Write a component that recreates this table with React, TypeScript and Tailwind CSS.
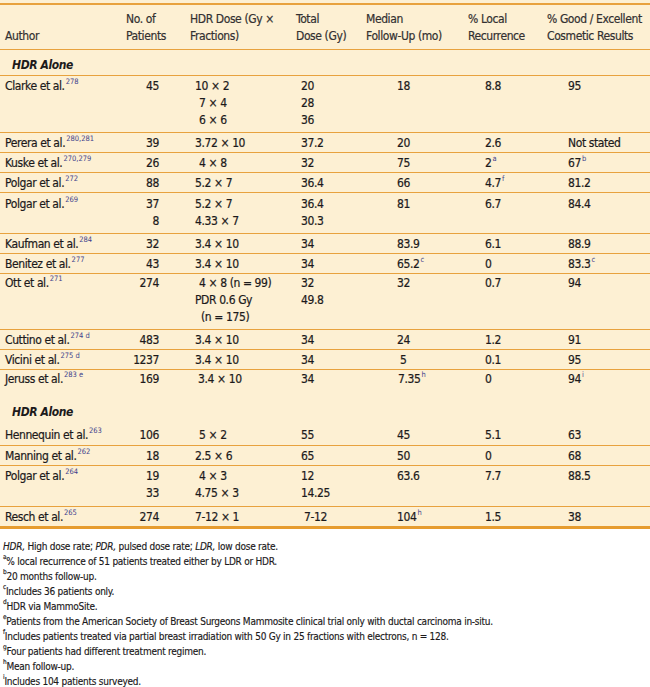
import React from "react"

const LINE = "border-[#e8a23e]"

function Ref({ children }: { children: React.ReactNode }) {
  return <sup className="ml-[1px] text-[7.5px] tracking-normal text-[#3d3f8c] top-[-0.75em] [-webkit-text-stroke:0px]">{children}</sup>
}

type Dose = [string, boolean?]

type Row = {
  author: React.ReactNode
  patients: string[]
  dose: Dose[]
  total: string[]
  median: React.ReactNode[]
  local: React.ReactNode[]
  cosmetic: React.ReactNode[]
  pad?: string
  noLine?: boolean
}

const first: Row[] = [
  {
    author: <>Clarke et al.<Ref>278</Ref></>,
    patients: ["45"],
    dose: [["10 × 2"], ["7 × 4", true], ["6 × 6", true]],
    total: ["20", "28", "36"],
    median: ["18"],
    local: ["8.8"],
    cosmetic: ["95"],
    pad: "pt-[2px] pb-[3px]",
  },
  {
    author: <>Perera et al.<Ref>280,281</Ref></>,
    patients: ["39"],
    dose: [["3.72 × 10"]],
    total: ["37.2"],
    median: ["20"],
    local: ["2.6"],
    cosmetic: ["Not stated"],
  },
  {
    author: <>Kuske et al.<Ref>270,279</Ref></>,
    patients: ["26"],
    dose: [["4 × 8", true]],
    total: ["32"],
    median: ["75"],
    local: [<>2<Ref>a</Ref></>],
    cosmetic: [<>67<Ref>b</Ref></>],
  },
  {
    author: <>Polgar et al.<Ref>272</Ref></>,
    patients: ["88"],
    dose: [["5.2 × 7"]],
    total: ["36.4"],
    median: ["66"],
    local: [<>4.7<Ref>f</Ref></>],
    cosmetic: ["81.2"],
  },
  {
    author: <>Polgar et al.<Ref>269</Ref></>,
    patients: ["37", "8"],
    dose: [["5.2 × 7"], ["4.33 × 7"]],
    total: ["36.4", "30.3"],
    median: ["81"],
    local: ["6.7"],
    cosmetic: ["84.4"],
    pad: "pt-[3px] pb-[3px]",
  },
  {
    author: <>Kaufman et al.<Ref>284</Ref></>,
    patients: ["32"],
    dose: [["3.4 × 10"]],
    total: ["34"],
    median: ["83.9"],
    local: ["6.1"],
    cosmetic: ["88.9"],
  },
  {
    author: <>Benitez et al.<Ref>277</Ref></>,
    patients: ["43"],
    dose: [["3.4 × 10"]],
    total: ["34"],
    median: [<>65.2<Ref>c</Ref></>],
    local: ["0"],
    cosmetic: [<>83.3<Ref>c</Ref></>],
  },
  {
    author: <>Ott et al.<Ref>271</Ref></>,
    patients: ["274"],
    dose: [["4 × 8 (n = 99)", true], ["PDR 0.6 Gy"], ["  (n = 175)"]],
    total: ["32", "49.8"],
    median: ["32"],
    local: ["0.7"],
    cosmetic: ["94"],
    pad: "pt-[1px] pb-[3px]",
  },
  {
    author: <>Cuttino et al.<Ref>274 d</Ref></>,
    patients: ["483"],
    dose: [["3.4 × 10"]],
    total: ["34"],
    median: ["24"],
    local: ["1.2"],
    cosmetic: ["91"],
  },
  {
    author: <>Vicini et al.<Ref>275 d</Ref></>,
    patients: ["1237"],
    dose: [["3.4 × 10"]],
    total: ["34"],
    median: [<span className="pl-[3px]">5</span>],
    local: ["0.1"],
    cosmetic: ["95"],
  },
  {
    author: <>Jeruss et al.<Ref>283 e</Ref></>,
    patients: ["169"],
    dose: [[" 3.4 × 10"]],
    total: ["34"],
    median: [<span className="pl-[1px]">7.35<Ref>h</Ref></span>],
    local: ["0"],
    cosmetic: [<>94<Ref>i</Ref></>],
    pad: "pt-[1px] pb-[16px]",
    noLine: true,
  },
]

const second: Row[] = [
  {
    author: <>Hennequin et al.<Ref>263</Ref></>,
    patients: ["106"],
    dose: [["5 × 2", true]],
    total: ["55"],
    median: ["45"],
    local: ["5.1"],
    cosmetic: ["63"],
    pad: "pt-[4px] pb-[1px]",
  },
  {
    author: <>Manning et al.<Ref>262</Ref></>,
    patients: ["18"],
    dose: [["2.5 × 6"]],
    total: ["65"],
    median: ["50"],
    local: ["0"],
    cosmetic: ["68"],
  },
  {
    author: <>Polgar et al.<Ref>264</Ref></>,
    patients: ["19", "33"],
    dose: [["4 × 3", true], ["4.75 × 3"]],
    total: ["12", "14.25"],
    median: ["63.6"],
    local: ["7.7"],
    cosmetic: ["88.5"],
    pad: "pt-[2px] pb-[4px]",
  },
  {
    author: <>Resch et al.<Ref>265</Ref></>,
    patients: ["274"],
    dose: [["7-12 × 1"]],
    total: [" 7-12"],
    median: [<>104<Ref>h</Ref></>],
    local: ["1.5"],
    cosmetic: ["38"],
    noLine: true,
  },
]

function Lines({ items }: { items: React.ReactNode[] }) {
  return (
    <>
      {items.map((it, i) => (
        <div key={i} className="whitespace-pre">
          {it}
        </div>
      ))}
    </>
  )
}

function DataRow({ row }: { row: Row }) {
  const cell = `align-top ${row.pad ?? "pt-[2px] pb-0"} ${row.noLine ? "" : `border-b ${LINE}`}`
  return (
    <tr>
      <td className={`${cell} pl-[5px] whitespace-nowrap`}>{row.author}</td>
      <td className={`${cell} pr-[26px] text-right`}>
        <Lines items={row.patients} />
      </td>
      <td className={`${cell} pl-[10px]`}>
        {row.dose.map(([d, short], i) => (
          <div key={i} className={`whitespace-pre ${short ? "pl-[4px]" : ""}`}>
            {d}
          </div>
        ))}
      </td>
      <td className={`${cell} pl-[11px]`}>
        <Lines items={row.total} />
      </td>
      <td className={`${cell} pl-[37px]`}>
        <Lines items={row.median} />
      </td>
      <td className={`${cell} pl-[23px]`}>
        <Lines items={row.local} />
      </td>
      <td className={`${cell} pl-[26px]`}>
        <Lines items={row.cosmetic} />
      </td>
    </tr>
  )
}

function Section({ label, line, pad }: { label: string; line: boolean; pad: string }) {
  return (
    <tr>
      <td colSpan={7} className={`${pad} pl-[12px] font-bold italic [-webkit-text-stroke:0px] ${line ? `border-b ${LINE}` : ""}`}>
        {label}
      </td>
    </tr>
  )
}

const notes: [string, React.ReactNode][] = [
  ["a", "% local recurrence of 51 patients treated either by LDR or HDR."],
  ["b", "20 months follow-up."],
  ["c", "Includes 36 patients only."],
  ["d", "HDR via MammoSite."],
  ["e", "Patients from the American Society of Breast Surgeons Mammosite clinical trial only with ductal carcinoma in-situ."],
  ["f", "Includes patients treated via partial breast irradiation with 50 Gy in 25 fractions with electrons, n = 128."],
  ["g", "Four patients had different treatment regimen."],
  ["h", "Mean follow-up."],
  ["i", "Includes 104 patients surveyed."],
]

const head = `border-t-2 border-b ${LINE} align-bottom text-left font-normal pb-[4px] whitespace-nowrap`

export default function App() {
  return (
    <div className="w-[650px] h-[687px] bg-white text-[#1c1a1b] font-['Liberation_Sans_Narrow','DejaVu_Sans_Condensed',sans-serif] overflow-hidden">
      <div className="bg-[#fdf0d3] pt-[3px]">
        <table className="w-[650px] table-fixed border-collapse text-[12px] tracking-[-0.4px] leading-[17px] [-webkit-text-stroke:0.2px]">
          <colgroup>
            <col className="w-[120px]" />
            <col className="w-[65px]" />
            <col className="w-[105px]" />
            <col className="w-[70px]" />
            <col className="w-[102px]" />
            <col className="w-[80px]" />
            <col className="w-[108px]" />
          </colgroup>
          <thead>
            <tr className="text-[#333031]">
              <th className={`${head} pl-[5px] h-[45px]`}>Author</th>
              <th className={`${head} pl-[6px]`}>
                No. of
                <br />
                Patients
              </th>
              <th className={`${head} pl-[5px]`}>
                HDR Dose (Gy ×
                <br />
                Fractions)
              </th>
              <th className={`${head} pl-[6px]`}>
                Total
                <br />
                Dose (Gy)
              </th>
              <th className={`${head} pl-[6px]`}>
                Median
                <br />
                Follow-Up (mo)
              </th>
              <th className={`${head} pl-[6px]`}>
                % Local
                <br />
                Recurrence
              </th>
              <th className={`${head} pl-[5px]`}>
                % Good / Excellent
                <br />
                Cosmetic Results
              </th>
            </tr>
          </thead>
          <tbody>
            <Section label="HDR Alone" line pad="pt-[7px] pb-[1px]" />
            {first.map((r, i) => (
              <DataRow key={i} row={r} />
            ))}
            <Section label="HDR Alone" line={false} pad="pt-0 pb-[2px]" />
            {second.map((r, i) => (
              <DataRow key={i} row={r} />
            ))}
          </tbody>
        </table>
        <div className="h-[3px] bg-[#e69c2f]" />
      </div>
      <div className="pt-[10px] pl-[3px] text-[10px] tracking-[-0.25px] leading-[15px] [-webkit-text-stroke:0.15px]">
        <div>
          <i>HDR,</i> High dose rate; <i>PDR,</i> pulsed dose rate; <i>LDR,</i> low dose rate.
        </div>
        {notes.map(([k, t]) => (
          <div key={k}>
            <sup className="text-[6.5px] top-[-0.9em]">{k}</sup>
            {t}
          </div>
        ))}
      </div>
    </div>
  )
}
